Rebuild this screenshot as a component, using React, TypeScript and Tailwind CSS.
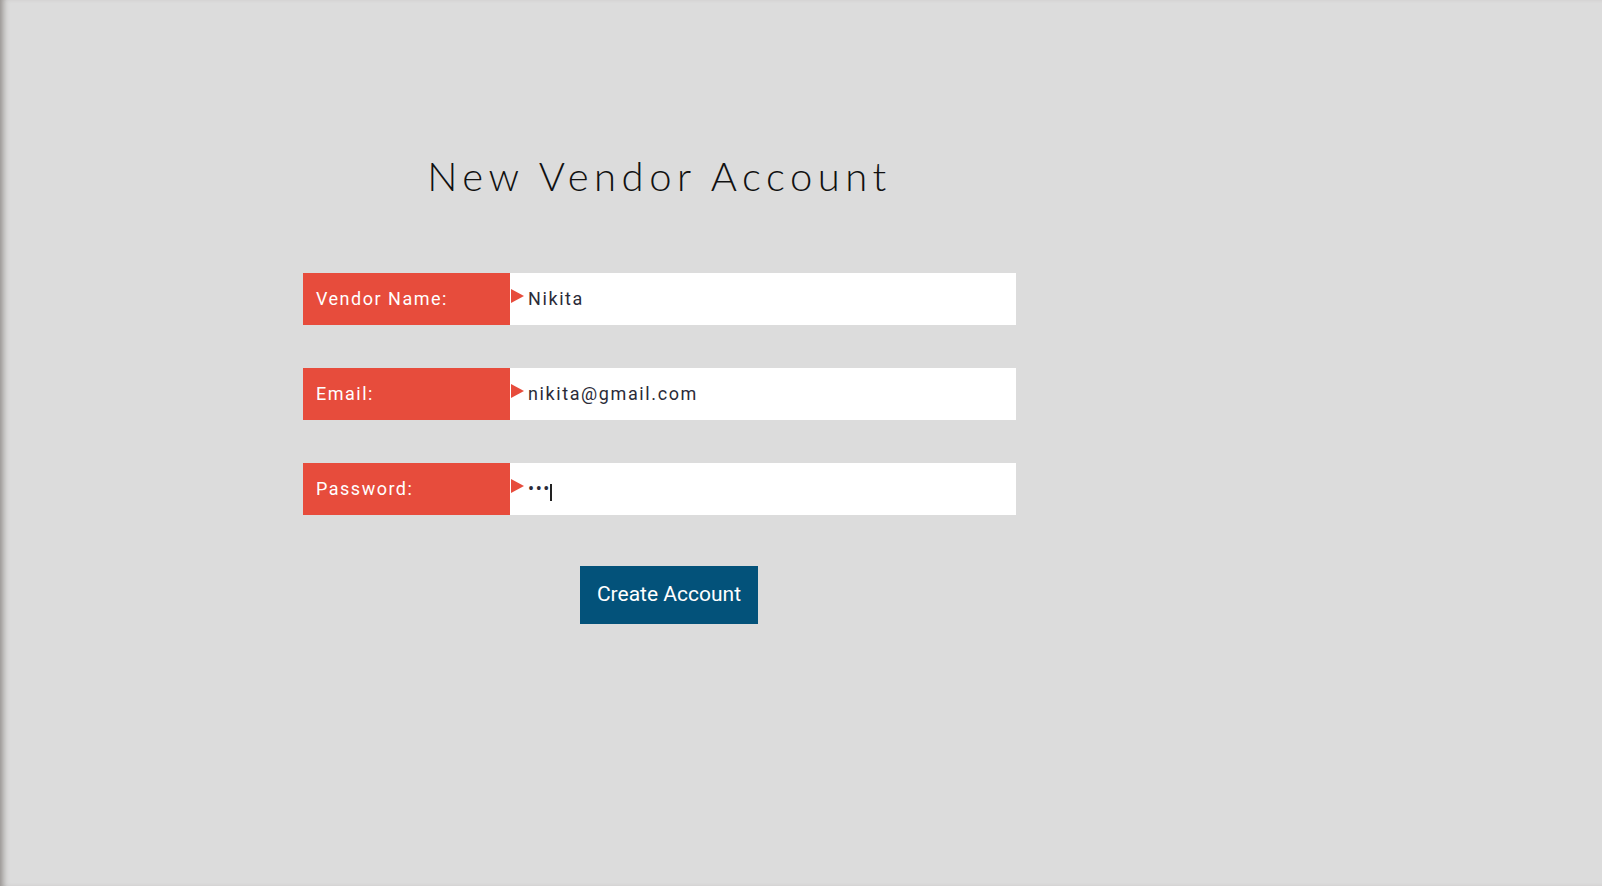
import React from 'react'

const fields = [
  { label: 'Vendor Name:', type: 'text', value: 'Nikita' },
  { label: 'Email:', type: 'email', value: 'nikita@gmail.com' },
  { label: 'Password:', type: 'password', value: 'abc' },
]

export default function App() {
  return (
    <div className="min-h-[886px] w-full bg-[#dcdcdc] shadow-[inset_7px_0_6px_-4px_rgba(60,50,45,0.45)] font-['Roboto',sans-serif]">
      <div className="ml-[303px] w-[713px] pt-[152px]">
        <h1 className="text-center text-[40px] leading-[48px] font-light tracking-[5.5px] text-[#111] font-['Lato',sans-serif]">
          New Vendor Account
        </h1>

        <div className="mt-[73px] flex flex-col gap-[43px]">
          {fields.map((field) => (
            <div key={field.label} className="flex h-[52px]">
              <label className="flex w-[207px] items-center bg-[#e74c3c] pb-[2px] pl-[13px] text-[18px] tracking-[1.5px] text-white">
                {field.label}
              </label>
              <div className="relative flex-1 bg-white">
                <svg className="absolute left-[1px] top-[16px]" width="13" height="14" viewBox="0 0 13 14">
                  <polygon points="0,0 13,7 0,14" fill="#e74c3c" />
                </svg>
                <input
                  type={field.type}
                  defaultValue={field.value}
                  className="h-full w-full bg-transparent pb-[2px] pl-[18px] text-[18px] tracking-[1.6px] text-[#2b2b38] outline-none"
                />
                {field.type === 'password' && (
                  <span className="absolute left-[40px] top-[21px] h-[17px] w-[1.5px] bg-[#222]" />
                )}
              </div>
            </div>
          ))}
        </div>

        <button className="mt-[51px] ml-[277px] h-[58px] w-[178px] bg-[#03527a] text-[21px] font-normal text-white">
          Create Account
        </button>
      </div>
    </div>
  )
}
